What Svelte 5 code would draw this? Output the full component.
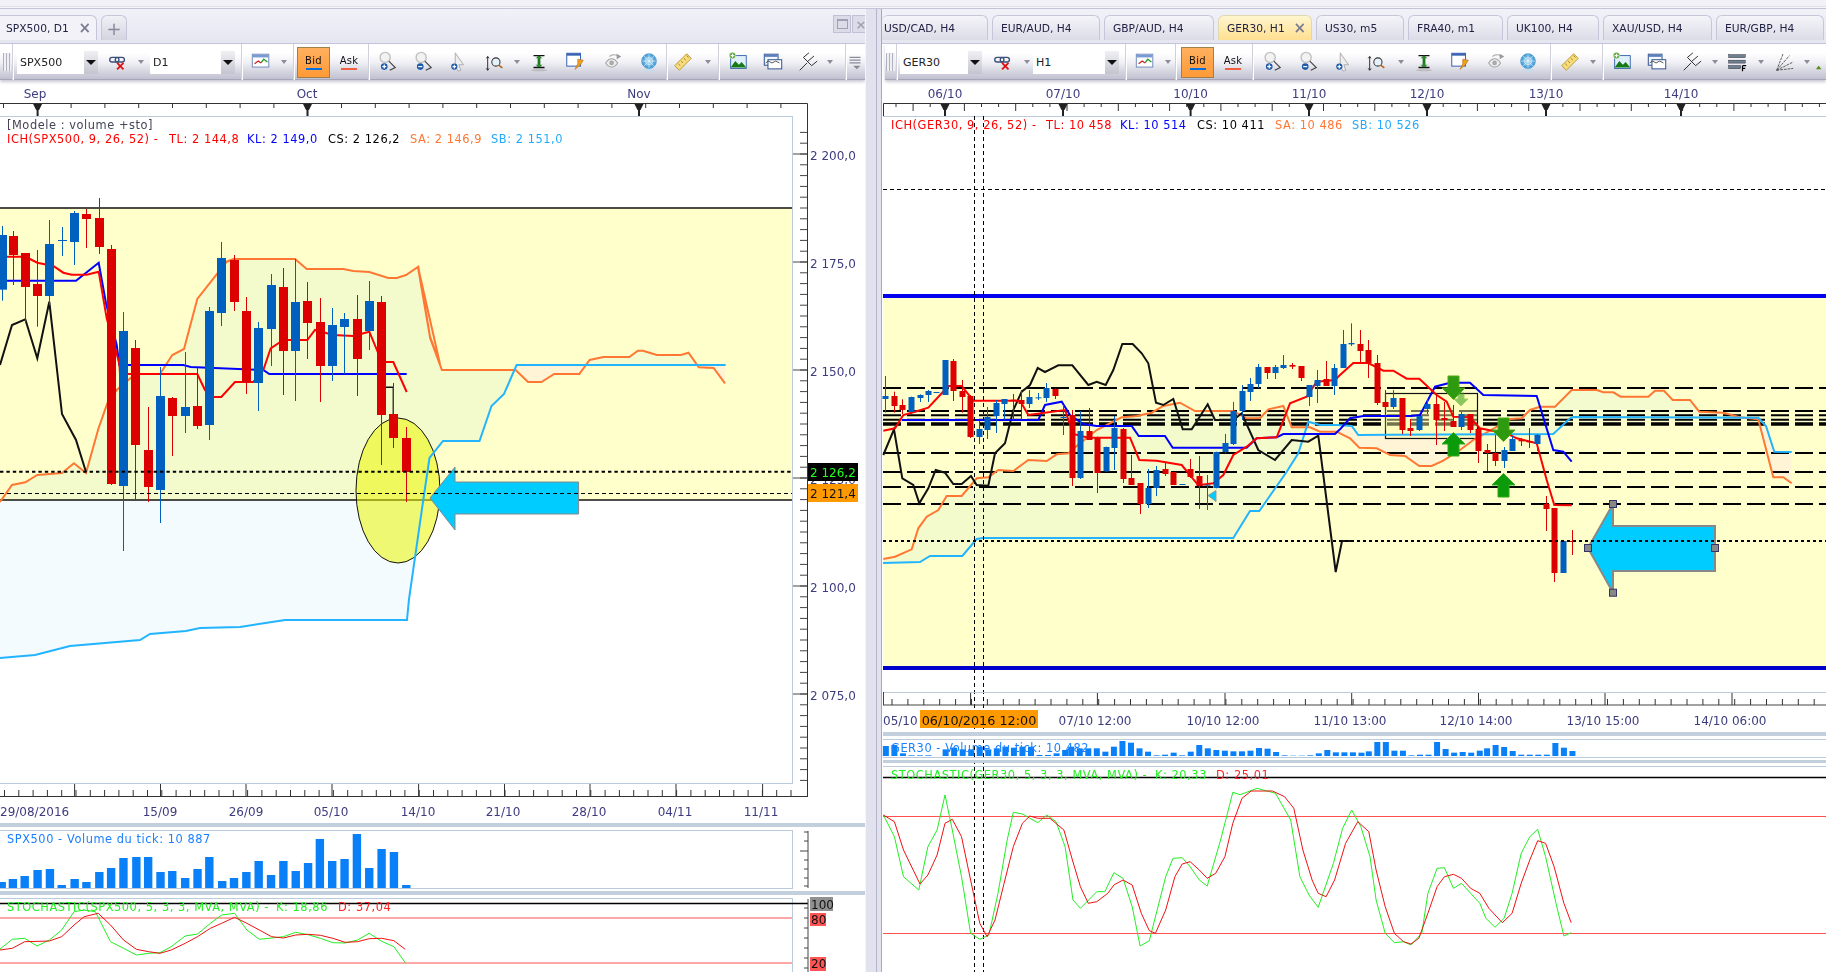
<script lang="ts">
  // every chart series below was read off a zoomed crop; each converter maps crop units to page pixels
  type Conv = (x: number, y: number) => [number, number];
  const z3: Conv = (x, y) => [x / 3, 190 + y / 3];
  const z4: Conv = (x, y) => [340 + x / 2.904, 240 + y / 3];
  const z5: Conv = (x, y) => [x / 1.782, 780 + y / 3];
  const z6: Conv = (x, y) => [870 + x / 3, 340 + y / 3];
  const z7: Conv = (x, y) => [1340 + x / 3, 340 + y / 3];
  const z8: Conv = (x, y) => [870 + x / 1.64, 680 + y / 3];

  function conv(flat: number[], c: Conv): [number, number][] {
    const out: [number, number][] = [];
    for (let i = 0; i < flat.length; i += 2) out.push(c(flat[i], flat[i + 1]));
    return out;
  }
  const pts = (list: [number, number][]) => list.map((p) => p[0].toFixed(1) + ',' + p[1].toFixed(1)).join(' ');
  const range = (from: number, step: number, to: number) => {
    const out: number[] = [];
    for (let v = from; step > 0 ? v <= to : v >= to; v += step) out.push(v);
    return out;
  };

  type Candle = { x: number; wt: number; bt: number; bb: number; wb: number; c: string };
  function candles(raw: (number | string)[][], c: Conv): Candle[] {
    return raw.map(([x, wt, bt, bb, wb, col]) => {
      const [px, pwt] = c(x as number, wt as number);
      const [, pbt] = c(x as number, bt as number);
      const [, pbb] = c(x as number, bb as number);
      const [, pwb] = c(x as number, wb as number);
      return { x: Math.round(px), wt: pwt, bt: pbt, bb: pbb, wb: pwb, c: col === 'r' ? '#dd0000' : '#0060c0' };
    });
  }

  // ---- left chart
  const leftCandles = candles([
    [5,108,135,299,332,'b'],[38,123,138,195,285,'r'],[76,190,189,291,400,'r'],[112,180,282,318,410,'r'],
    [148,90,162,318,345,'b'],[186,111,150,153,198,'b'],[223,63,69,156,225,'b'],[259,57,72,87,174,'r'],
    [296,24,84,171,192,'r'],[334,165,177,882,885,'r'],[370,366,423,888,1083,'b'],[406,450,474,765,931,'r'],
    [445,651,780,891,936,'r'],[481,531,618,900,999,'b'],[517,621,624,678,798,'r'],[554,486,651,678,729,'b'],
    [592,534,648,708,717,'r'],[628,351,363,705,750,'b'],[664,156,204,369,408,'b'],[702,195,210,336,363,'r'],
    [739,321,363,576,612,'r'],[775,396,414,579,663,'b'],[812,252,285,417,528,'b'],[850,234,291,483,615,'r'],
    [886,207,336,483,633,'b'],[922,276,333,399,507,'r'],[960,324,396,528,636,'r'],[997,354,405,528,573,'b'],
    [1033,369,387,411,552,'b'],[1070,315,387,507,618,'r'],[1108,273,333,423,480,'b'],[1144,318,336,675,825,'r'],
    [1180,579,672,744,774,'r'],[1218,711,744,846,936,'r']
  ], z3);

  const leftKijun = conv([0,272,228,272,296,218,318,340,350,465,358,525,550,525,572,531,790,540,808,552,1220,552], z3);
  const leftTenkan = conv([15,200,63,200,90,207,112,218,160,228,190,248,215,254,260,254,296,245,320,385,358,520,360,552,592,552,615,600,640,621,664,621,705,576,760,576,790,540,812,475,850,450,922,450,945,420,1000,435,1060,438,1108,425,1135,490,1155,516,1180,516,1220,606], z3);
  const leftChikou = conv([0,525,36,405,76,388,112,505,148,335,186,672,228,750,258,846], z3);
  const leftChikou2 = conv([1158,592,1180,592,1180,672], z3);
  const leftSaA = conv([0,936,36,885,76,877,112,855,186,849,222,820,258,849,295,717,322,640,350,600,406,552,480,552,517,495,552,477,592,327,680,215,700,207,885,207,920,237,1030,237,1060,243,1108,246,1165,264,1190,264,1218,255,1255,230,1290,440,1320,522], z3);
  const leftSaB = conv([226,78,262,295,296,390,510,390], z4);
  const leftSaC = conv([510,390,546,426,585,426,622,402,695,402,725,360], z4);
  const leftSaD = conv([725,360,765,351,840,351,865,332,880,332,920,345,990,345,1012,338,1042,382], z4);
  const leftSaE = conv([1042,382,1085,384,1118,430], z4);
  const leftSa = [...leftSaA, ...leftSaB, ...leftSaC, ...leftSaD, ...leftSaE];
  const leftSb: [number, number][] = [[0,658],[35,655],[70,646],[140,640],[150,634],[186,631],[200,628],[240,627],[285,620],[407,620],[409,599],[424,495],[429.5,458],[443,441],[479.5,441],[491.5,406],[504,394],[516.6,365],[725.7,365]];
  const leftCloud = [...leftSaA, ...leftSaB, ...leftSb.slice(0, 18).reverse()];
  const leftOrange1 = [...leftSaC, ...conv([725,375,510,375], z4)];
  const leftGreen2 = [...leftSaD, ...conv([1042,375,725,375], z4)];
  const leftOrange2 = [...leftSaE, ...conv([1118,375,1042,375], z4)];

  const leftVol = [[3,306],[23,297],[44,288],[67,270],[89,267],[110,315],[133,297],[154,306],[177,276],[198,264],[220,234],[243,231],[264,231],[286,276],[307,273],[330,294],[352,267],[373,231],[396,303],[417,294],[439,276],[461,243],[483,285],[505,243],[527,273],[549,249],[570,177],[592,243],[614,237],[636,162],[658,264],[680,207],[702,216],[724,315]]
    .map(([x, y]) => ({ x: x / 1.782, y: 780 + y / 3 }));

  const leftK = conv([0,507,22,478,44,475,66,498,88,480,110,450,132,395,150,390,170,395,197,485,220,505,243,525,265,520,285,518,305,500,330,468,352,462,375,430,395,405,418,400,440,450,462,478,484,474,505,470,527,457,549,464,571,475,593,488,615,489,637,480,658,460,680,484,702,500,723,550], z5);
  const leftD = conv([0,510,22,505,44,485,88,483,110,470,132,435,150,410,175,400,197,435,220,480,243,508,265,515,285,520,305,510,330,490,352,470,375,445,395,430,418,412,440,430,462,450,484,470,505,474,527,465,549,463,571,466,593,475,615,487,637,485,658,476,680,475,702,482,722,508], z5);

  const leftPrices = [[2200, 154], [2175, 262], [2150, 370], [2125, 478], [2100, 586], [2075, 694]];
  const fmtPrice = (p: number) => String(p).replace(/^(\d)(\d{3})$/, '$1 $2') + ',0';
  const leftDates = [[160, '15/09'], [246, '26/09'], [331, '05/10'], [418, '14/10'], [503, '21/10'], [589, '28/10'], [675, '04/11'], [761, '11/11']] as [number, string][];
  const leftMajors = [74.6, 160.5, 246, 332, 418.6, 504.5, 590, 676, 762.6];

  // ---- right chart
  const rightCandles = candles([
    [46,108,168,177,218,'b'],[72,155,168,198,218,'r'],[97,178,195,210,222,'r'],[123,170,171,216,222,'b'],
    [149,163,165,174,186,'b'],[174,150,153,165,186,'b'],[199,156,156,158,158,'b'],[225,60,60,165,165,'b'],
    [250,57,63,153,183,'r'],[276,120,153,171,218,'r'],[301,165,168,291,294,'r'],[327,243,267,291,312,'b'],
    [352,201,231,270,297,'b'],[378,180,189,228,279,'b'],[403,177,177,192,240,'b'],[429,162,179,183,240,'r'],
    [453,150,180,192,240,'r'],[478,150,171,192,204,'b'],[504,159,172,174,180,'b'],[529,129,144,174,186,'b'],
    [555,145,147,168,177,'r'],[580,195,231,233,285,'b'],[606,210,225,414,438,'r'],[631,213,273,414,417,'b'],
    [656,204,273,300,300,'r'],[682,290,294,399,459,'r'],[708,320,321,394,395,'b'],[733,228,264,324,390,'b'],
    [759,264,267,417,429,'r'],[784,345,414,435,435,'r'],[809,429,429,492,522,'r'],[834,387,444,492,504,'b'],
    [859,378,390,444,468,'b'],[885,366,387,402,408,'r'],[910,396,396,435,435,'r'],[936,432,432,435,435,'b'],
    [961,357,387,411,414,'r'],[987,348,408,438,507,'r'],[1012,405,434,436,510,'b'],[1038,335,336,444,445,'b'],
    [1064,282,309,336,340,'b'],[1089,186,213,312,315,'b'],[1115,135,153,213,240,'b'],[1140,114,132,156,183,'b'],
    [1165,72,81,132,144,'b'],[1190,81,81,99,117,'r'],[1215,75,81,99,117,'b'],[1240,45,75,84,87,'b'],
    [1266,69,75,80,87,'r'],[1292,78,78,114,123,'r'],[1317,135,135,171,198,'b'],[1342,90,120,138,189,'b'],
    [1368,63,117,138,138,'r'],[1393,72,84,138,165,'b'],[1418,-30,12,84,84,'b']
  ], z6).concat(candles([
    [34,-50,9,13,18,'b'],[60,-30,12,33,66,'r'],[85,0,30,69,114,'r'],[110,45,69,189,195,'r'],
    [136,150,186,201,270,'r'],[160,150,174,201,207,'b'],[186,174,174,270,282,'r'],[211,237,264,273,288,'r'],
    [236,228,228,270,273,'b'],[262,177,192,207,222,'b'],[288,165,192,240,315,'r'],[313,186,234,240,273,'r'],
    [339,195,243,261,261,'r'],[364,216,222,261,270,'b'],[390,222,222,270,279,'r'],[415,261,267,333,369,'r'],
    [440,312,330,339,393,'r'],[466,285,339,363,378,'r'],[491,321,330,363,384,'b'],[517,288,297,333,333,'b'],
    [542,294,300,304,318,'r'],[568,264,303,307,324,'r'],[592,282,285,312,333,'b'],[618,468,492,507,573,'r'],
    [643,504,504,699,726,'r'],[669,603,603,699,699,'b'],[695,570,603,606,645,'r']
  ], z7));

  const rightKijun = [...conv([95,240,505,240,525,195,575,185,600,225,640,252,680,258,785,258,806,288,885,288,908,323,1130,323,1160,295,1220,292,1240,282,1395,282], z6), ...conv([0,268,30,235,70,228,215,228,240,225,285,140,330,128,390,128,430,165,590,168,640,330,670,335,695,365], z7)];
  const rightTenkan = [...conv([40,272,75,265,100,225,135,215,175,203,215,160,235,138,275,138,310,182,450,182,475,225,585,210,610,282,655,293,780,293,808,360,860,362,935,375,985,436,1030,430,1060,405,1090,345,1130,320,1160,295,1220,292,1260,190,1310,170,1340,125,1395,120], z6), ...conv([0,105,40,69,85,69,130,92,160,92,200,116,238,116,290,165,320,185,340,230,390,232,420,265,460,273,490,275,530,295,590,310,620,420,643,495,695,496], z7)];
  const rightChikou = [...conv([40,345,72,268,97,415,130,435,148,490,175,445,197,390,225,398,250,432,275,432,303,408,320,435,355,437,375,340,405,310,430,210,455,155,480,135,503,84,525,96,565,76,607,76,655,135,680,125,707,135,730,90,757,12,788,12,815,40,835,70,858,188,880,195,910,177,938,268,965,268,1013,193,1035,240,1090,240,1115,220,1165,330,1215,360,1265,300,1315,305,1345,287,1397,696], z6), ...conv([6,603,40,603], z7)];
  const rSaA = conv([40,657,75,650,125,628,145,565,170,530,205,510,230,468,275,468,320,415,355,412,385,390,430,393,475,360,530,363,560,343,595,340,620,318,680,270,755,232,800,228,845,218,880,198,930,188,975,213,1090,213,1130,235,1170,235,1195,208,1240,198,1265,262,1320,262], z6);
  const rSaB = conv([1350,275,1400,275], z6);
  const rSaC = conv([30,295,58,323,110,325,150,345,195,348,238,378,275,378,310,362,360,330,400,300], z7);
  const rSaD = conv([512,237,545,235,570,210,600,200,645,200,695,150,770,150,790,157,820,157,842,170,925,170,945,152,972,152,998,180,1050,180,1078,215,1150,218,1200,232,1255,238,1300,412,1330,412,1355,430], z7);
  const rightSa = [...rSaA, ...rSaB, ...rSaC, ...rSaD];
  const rSbA: [number, number][] = [[883,563],[920,562],...conv([180,648,277,648,320,597,340,594,1090,594,1140,513,1168,513,1250,395,1285,340,1315,245,1350,255,1400,255], z6)];
  const rSbB = conv([35,258,55,285,640,282,690,235,700,231,1255,233,1278,258,1303,335,1355,336], z7);
  const rightSb = [...rSbA, ...rSbB];
  const rightGreen1 = [...rSaA, ...rSbA.slice(0, 11).reverse()];
  const rightOrange1 = conv([-95,245,0,268,35,258,55,285,425,288,400,300,360,330,310,362,275,378,238,378,195,348,150,345,110,325,58,323,30,295,-30,275,-90,262], z7);
  const rightGreen2 = conv([425,288,512,237,545,235,570,210,600,200,645,200,695,150,770,150,790,157,820,157,842,170,925,170,945,152,972,152,998,180,1050,180,1078,215,1150,218,1200,232,700,232,690,235,640,282], z7);
  const rightOrange2 = conv([1255,235,1278,258,1303,335,1355,336,1355,430,1330,412,1300,412], z7);
  const dashRows = [388, 411, 415.3, 419.7, 453, 472, 487, 504];

  const rightVolRaw = [[26,198],[40,195],[54,220],[68,226],[82,226],[96,226],[110,228],[124,208],[138,203],[152,208],[166,208],[180,200],[194,208],[208,205],[222,200],[236,203],[250,200],[264,200],[278,225],[292,225],[306,220],[320,210],[330,200],[344,205],[358,205],[372,205],[386,215],[400,200],[414,183],[428,188],[442,205],[456,215],[470,226],[484,224],[498,218],[512,226],[526,215],[540,195],[554,205],[568,210],[582,212],[596,214],[610,214],[624,212],[638,204],[652,206],[666,216],[680,226],[694,227],[708,227],[722,226],[736,220],[750,210],[764,217],[778,217],[792,217],[806,218],[818,214],[832,186],[846,186],[860,212],[874,212],[888,226],[902,224],[916,224],[930,186],[944,207],[958,218],[972,216],[986,218],[1000,212],[1012,205],[1026,195],[1040,201],[1054,213],[1068,224],[1082,224],[1096,224],[1110,224],[1124,189],[1138,203],[1152,213]];
  const rightVol = rightVolRaw.map(([x, y]) => ({ x: 870 + x / 1.64, y: 680 + y / 3 }));

  const rightK = conv([22,405,40,470,55,590,80,630,95,500,110,450,123,345,135,450,150,590,165,760,180,778,195,765,210,640,225,480,235,397,250,402,275,428,290,405,305,425,320,500,333,660,345,685,372,635,385,635,400,578,415,595,430,680,443,798,458,782,485,590,497,535,512,533,525,560,540,600,553,618,575,480,595,337,607,344,635,325,665,340,690,420,705,590,720,645,735,682,760,550,775,445,790,390,805,440,820,530,830,660,845,760,860,788,875,785,887,795,905,760,915,640,930,565,942,563,957,625,970,610,985,640,1000,670,1010,715,1025,742,1040,715,1053,640,1068,520,1082,470,1095,448,1108,530,1125,670,1138,768,1150,758], z8);
  const rightD = conv([22,405,40,425,55,510,82,612,95,585,110,525,123,430,135,418,150,470,165,600,180,730,192,770,205,720,220,610,235,500,250,430,262,408,275,415,295,415,318,450,332,540,345,620,358,670,372,665,390,640,400,615,415,600,430,615,445,700,458,752,468,760,485,690,500,590,512,552,525,545,540,570,553,595,567,580,582,530,595,430,610,355,625,333,660,333,680,350,695,385,710,510,725,600,735,640,748,650,762,600,780,490,800,425,818,455,830,570,845,680,860,760,875,785,887,792,900,775,915,700,930,620,942,590,957,583,970,595,985,625,1000,640,1015,685,1037,728,1053,700,1068,610,1082,540,1095,482,1108,490,1122,560,1138,670,1150,728], z8);

  const rightTop = [[945, '06/10'], [1063, '07/10'], [1190.6, '10/10'], [1309, '11/10'], [1427, '12/10'], [1546, '13/10'], [1681, '14/10']] as [number, string][];
  const rightBottom = [[1095, '07/10 12:00'], [1223, '10/10 12:00'], [1350, '11/10 13:00'], [1476, '12/10 14:00'], [1603, '13/10 15:00'], [1730, '14/10 06:00']] as [number, string][];
  const rightMajors = [970.6, 1097.4, 1225, 1351.7, 1478.5, 1605, 1732];

  // ---- toolbars: [kind, width] laid out in order
  type Tool = [string, number, string?];
  const leftTools: Tool[] = [
    ['gap', 3], ['grip', 8], ['gap', 1], ['sep', 1], ['gap', 4], ['select', 81, 'SPX500'], ['link', 40], ['arrow', 6], ['gap', 6],
    ['select', 85, 'D1'], ['gap', 6], ['sep', 1], ['chart', 38], ['arrow', 8], ['gap', 5], ['sep', 1], ['gap', 3], ['bid', 33], ['ask', 38], ['sep', 1],
    ['zoomin', 36], ['zoomout', 35], ['cursor', 36], ['zoomrect', 38], ['arrow', 6], ['iheight', 38], ['note', 34], ['eye', 42], ['radar', 30],
    ['gap', 2], ['sep', 1], ['ruler', 32], ['arrow', 18], ['gap', 1], ['sep', 1], ['pic', 38], ['window', 32], ['fork', 38], ['arrow', 6], ['gap', 12], ['sep', 1], ['more', 18]
  ];
  const rightTools: Tool[] = [
    ['gap', 1], ['grip', 9], ['gap', 1], ['sep', 1], ['gap', 3], ['select', 82, 'GER30'], ['link', 42], ['arrow', 6], ['gap', 3],
    ['select', 86, 'H1'], ['gap', 6], ['sep', 1], ['chart', 38], ['arrow', 8], ['gap', 3], ['sep', 1], ['gap', 5], ['bid', 33], ['ask', 38], ['sep', 1],
    ['zoomin', 37], ['zoomout', 35], ['cursor', 35], ['zoomrect', 34], ['arrow', 14], ['iheight', 32], ['note', 40], ['eye', 32], ['radar', 32],
    ['gap', 6], ['sep', 1], ['ruler', 38], ['arrow', 8], ['gap', 5], ['sep', 1], ['pic', 38], ['window', 32], ['fork', 38], ['arrow', 8],
    ['rows', 36], ['arrow', 12], ['fan', 34], ['arrow', 12], ['next', 26]
  ];
  const rightTabs = [
    ['USD/CAD, H4', 106], ['EUR/AUD, H4', 108], ['GBP/AUD, H4', 110], ['GER30, H1', 94], ['US30, m5', 88],
    ['FRA40, m1', 95], ['UK100, H4', 92], ['XAU/USD, H4', 109], ['EUR/GBP, H4', 108]
  ] as [string, number][];
</script>

{#snippet toolbar(items: Tool[])}
  <div class="toolbar">
    {#each items as [kind, w, label]}
      <div class="tool" style:width="{w}px">
        {#if kind === 'grip'}
          <span class="grip"></span>
        {:else if kind === 'sep'}
          <span class="sep"></span>
        {:else if kind === 'select'}
          <span class="select"><span>{label}</span><i class="drop"></i></span>
        {:else if kind === 'arrow'}
          <i class="caret"></i>
        {:else if kind === 'bid'}
          <span class="price-btn on">Bid<b class="blue"></b></span>
        {:else if kind === 'ask'}
          <span class="price-btn">Ask<b class="coral"></b></span>
        {:else if kind !== 'gap'}
          {@render icon(kind)}
        {/if}
      </div>
    {/each}
  </div>
{/snippet}

{#snippet icon(name: string)}
  <svg class="ico" viewBox="0 0 24 24" width="22" height="22">
    {#if name === 'link'}
      <rect x="3" y="7" width="10" height="5" rx="2.5" fill="none" stroke="#3a5078" stroke-width="1.5" />
      <rect x="9" y="7" width="10" height="5" rx="2.5" fill="none" stroke="#3a5078" stroke-width="1.5" />
      <path d="M11 13l7 7M18 13l-7 7" stroke="#e01010" stroke-width="2" />
    {:else if name === 'chart'}
      <rect x="2.5" y="3.5" width="18" height="14" fill="#fff" stroke="#6a82b8" />
      <rect x="3" y="4" width="17" height="3" fill="#7a9ad4" />
      <path d="M5 14l4-3 3 2" fill="none" stroke="#cc2222" stroke-width="1.4" />
      <path d="M12 13l3-4 4 3" fill="none" stroke="#2a9a2a" stroke-width="1.4" />
      <rect x="4" y="19" width="15" height="2" fill="#dcdce8" />
    {:else if name === 'zoomin' || name === 'zoomout'}
      <circle cx="10" cy="7" r="5.5" fill="#f2f2f2" stroke="#c0c0c0" stroke-width="1.5" />
      <path d="M14 11l7 7-6 3" fill="none" stroke="#444" stroke-width="1.2" />
      <circle cx="9" cy="17" r="3.6" fill="#1a58a8" />
      <path d="M6.8 17h4.4" stroke="#fff" stroke-width="1.4" />
      {#if name === 'zoomin'}<path d="M9 14.8v4.4" stroke="#fff" stroke-width="1.4" />{/if}
    {:else if name === 'cursor'}
      <path d="M9 2l9 13-5 0 2 6-3 1-3-6z" fill="#eee" stroke="#a8a8a8" />
      <circle cx="8" cy="17" r="3.4" fill="#1a58a8" />
      <path d="M6 17h4M8 15v4" stroke="#fff" stroke-width="1.3" />
    {:else if name === 'zoomrect'}
      <path d="M4 6v15M2.5 8l1.5-2 1.5 2M2.5 19l1.5 2 1.5-2" fill="none" stroke="#222" stroke-width="1" />
      <circle cx="13" cy="12" r="4.5" fill="#e4f2fb" stroke="#333" stroke-width="1.1" />
      <path d="M16 15.5l4 3" stroke="#c06010" stroke-width="1.8" />
    {:else if name === 'iheight'}
      <path d="M6 5h12M6 18h12" stroke="#111" stroke-width="1.5" />
      <path d="M12 6v11" stroke="#1d7a1d" stroke-width="3" />
      <path d="M9 8l3-3 3 3M9 15l3 3 3-3" fill="#2a9a2a" stroke="#114411" stroke-width=".7" />
      <ellipse cx="12" cy="21" rx="9" ry="1" fill="#bbb" />
    {:else if name === 'note'}
      <rect x="3" y="2.5" width="15" height="14" fill="#fff" stroke="#3a64b4" stroke-width="1.1" />
      <rect x="3" y="2.5" width="15" height="2.6" fill="#3a64b4" />
      <path d="M15 9l6 1-3 5-6 5 3-6z" fill="#f0a020" stroke="#b87010" stroke-width=".7" />
    {:else if name === 'eye'}
      <path d="M4 13c4-6 9-6 13 0-4 6-9 6-13 0z" fill="#eee" stroke="#a0a0a0" stroke-width="1.1" />
      <circle cx="10.5" cy="13" r="2.6" fill="#aaa" />
      <path d="M8 6c4-3 8-2 10 0" fill="none" stroke="#b4b4b4" stroke-width="1.4" />
      <path d="M16 3l5 3-5 3z" fill="#999" />
    {:else if name === 'radar'}
      <defs><radialGradient id="rg"><stop offset="0" stop-color="#bfe6f8" /><stop offset="1" stop-color="#3a94d0" /></radialGradient></defs>
      <circle cx="12" cy="11" r="8" fill="url(#rg)" stroke="#4c9ed8" />
      <path d="M12 3v16M4 11h16M6 5l12 12M18 5L6 17" stroke="#eaf6fc" stroke-width=".6" />
      <circle cx="12" cy="11" r="4" fill="none" stroke="#eaf6fc" stroke-width=".6" />
      <ellipse cx="12" cy="21" rx="6" ry="1.4" fill="#c2dcec" />
    {:else if name === 'ruler'}
      <path d="M3 16L16 3l5 5L8 21z" fill="#f7dc7c" stroke="#b89530" />
      <path d="M7 14l2 2M10 11l2 2M13 8l2 2M16 5l2 2" stroke="#9a7a20" />
    {:else if name === 'pic'}
      <rect x="4" y="5" width="17" height="14" fill="#dff0fb" stroke="#3462a8" />
      <path d="M4 18l5-7 4 4 3-3 5 6z" fill="#167a16" />
      <circle cx="6" cy="5" r="3.6" fill="#58a838" stroke="#fff" stroke-width=".6" />
      <path d="M4 5h4M6 3v4" stroke="#fff" stroke-width="1.2" />
    {:else if name === 'window'}
      <rect x="2.5" y="3.5" width="15" height="12" fill="#f4f8ff" stroke="#34558e" stroke-width="1.1" />
      <rect x="3" y="4" width="14" height="2.4" fill="#5a7fc0" />
      <rect x="6.5" y="9.5" width="15" height="10" fill="#fff" stroke="#34558e" stroke-width="1.1" />
      <path d="M4 13l3-2 4 2 4-2 4 2" fill="none" stroke="#222" stroke-width=".8" />
    {:else if name === 'fork'}
      <path d="M3 21l8-8M7 7l9 9M7 7l6-5M11.5 11.5l7-6M16 16l6-5" fill="none" stroke="#222" stroke-width="1" />
    {:else if name === 'rows'}
      <rect x="3" y="4" width="18" height="3.2" fill="#6f8090" stroke="#223" stroke-width=".5" />
      <rect x="3" y="10" width="18" height="3.2" fill="#6f8090" stroke="#223" stroke-width=".5" />
      <rect x="3" y="16" width="13" height="3.2" fill="#6f8090" stroke="#223" stroke-width=".5" />
      <path d="M18 16v6M18 16h4M18 19h3" stroke="#000" stroke-width="1.3" fill="none" />
    {:else if name === 'fan'}
      <path d="M4 21L18 5M4 21l7-18M4 21L22 12M4 21l18-2" fill="none" stroke="#444" stroke-width=".9" stroke-dasharray="3 1" />
    {:else if name === 'next'}
      <path d="M1 20l3-4 3 4z" fill="#5a8a1a" />
    {:else if name === 'more'}
      <path d="M6 7h12M6 10h12M6 13h12" stroke="#8a8a9c" stroke-width="1.2" />
      <path d="M10 16h8l-4 4z" fill="#8a8a9c" />
    {/if}
  </svg>
{/snippet}

{#snippet series(list: [number, number][], color: string, width: number)}
  <polyline points={pts(list)} fill="none" stroke={color} stroke-width={width} />
{/snippet}

{#snippet bars(list: Candle[], w: number)}
  {#each list as k}
    <line x1={k.x + 0.5} x2={k.x + 0.5} y1={k.wt} y2={k.wb} stroke={k.c} />
    <rect x={k.x + 0.5 - w / 2} y={k.bt} width={w} height={Math.max(k.bb - k.bt, 1)} fill={k.c} />
  {/each}
{/snippet}

<div class="screen">
  <div class="strip"></div>
  <div class="workspace">
    <section class="pane left">
      <div class="tabbar">
        <div class="tab first active-white" style:width="97px">
          <span>SPX500, D1</span><span class="close">×</span>
        </div>
        <div class="tab plus">+</div>
        <div class="winbtns">
          <span class="winbtn"><i class="restore"></i></span>
          <span class="winbtn">×</span>
        </div>
      </div>
      {@render toolbar(leftTools)}

      <svg class="chart" viewBox="0 80 865 892" width="865" height="892">
        <!-- top time axis -->
        <text class="axis" x="35" y="98" text-anchor="middle">Sep</text>
        <text class="axis" x="307" y="98" text-anchor="middle">Oct</text>
        <text class="axis" x="639" y="98" text-anchor="middle">Nov</text>
        <path d="M0 103.5H807.5V796" fill="none" stroke="#333" />
        {#each range(3.5, 33.8, 800) as t}
          <line x1={t} x2={t} y1="104" y2="108" stroke="#333" />
        {/each}
        {#each [37.6, 307.5, 639] as m}
          <path d="M{m - 4.5} 104h9l-3 6h-0.5v6h-2v-6h-0.5z" fill="#222" />
        {/each}

        <!-- price area -->
        <rect x="0" y="208" width="792" height="292" fill="#ffffcc" />
        <polygon class="cloud" points={pts(leftCloud)} />
        <polygon points={pts(leftOrange1)} fill="#fff5d6" />
        <polygon points={pts(leftGreen2)} fill="#f3fbcf" />
        <polygon points={pts(leftOrange2)} fill="#fff5d6" />
        <line x1="0" x2="792" y1="208" y2="208" stroke="#111" stroke-width="1.4" />
        <line x1="0" x2="792" y1="500" y2="500" stroke="#111" stroke-width="1.4" />

        <ellipse cx="398" cy="490.5" rx="42" ry="72.5" fill="rgba(235,245,0,0.55)" stroke="#111" />

        {@render series(leftSa, '#ff7733', 2)}
        {@render series(leftSb, '#22b4ff', 2)}
        {@render series(leftChikou, '#111', 2)}
        {@render series(leftChikou2, '#111', 1.4)}
        {@render series(leftKijun, '#0000ff', 2)}
        {@render series(leftTenkan, '#ff0000', 2)}
        {@render bars(leftCandles, 9)}

        <path d="M430 498L455 467V482H578.6V514H455V530Z" fill="#00ccff" stroke="#888" />
        <line x1="0" x2="792" y1="471.7" y2="471.7" stroke="#000" stroke-width="2" stroke-dasharray="3.4 3" />
        <line x1="0" x2="792" y1="493.5" y2="493.5" stroke="#000" stroke-dasharray="4 3" />

        <rect x="-2" y="116.5" width="794.5" height="667" fill="none" stroke="#bccbdc" />
        <text class="legend" x="7" y="129" fill="#445">[Modele : volume +sto]</text>
        <text class="legend" x="7" y="143">
          <tspan fill="#ff0000">ICH(SPX500, 9, 26, 52) -</tspan>
          <tspan x="169" fill="#ff0000">TL: 2 144,8</tspan>
          <tspan x="247" fill="#0000ff">KL: 2 149,0</tspan>
          <tspan x="328" fill="#000">CS: 2 126,2</tspan>
          <tspan x="410" fill="#ff7733">SA: 2 146,9</tspan>
          <tspan x="491" fill="#22aaff">SB: 2 151,0</tspan>
        </text>

        <!-- price scale -->
        {#each range(132.4, 10.8, 783) as t}
          <line x1="800" x2="807" y1={t} y2={t} stroke="#444" />
        {/each}
        {#each leftPrices as [p, y]}
          <line x1="793" x2="807" y1={y} y2={y} stroke="#444" />
          <text class="axis" x="810" y={y + 6}>{fmtPrice(p)}</text>
        {/each}
        <rect x="808" y="463" width="50" height="18" fill="#000" />
        <text class="axis green" x="810" y="476.5">2 126,2</text>
        <rect x="808" y="484" width="50" height="18" fill="#ff9900" />
        <text class="axis dark" x="810" y="498">2 121,4</text>

        <!-- bottom time axis -->
        <line x1="0" x2="808" y1="796.5" y2="796.5" stroke="#333" />
        {#each range(4.5, 14.3, 805) as t}
          <line x1={t} x2={t} y1="790" y2="796" stroke="#333" />
        {/each}
        {#each leftMajors as t}
          <line x1={t} x2={t} y1="784" y2="796" stroke="#333" />
        {/each}
        <text class="axis" x="0" y="816">29/08/2016</text>
        {#each leftDates as [x, d]}
          <text class="axis" x={x} y="816" text-anchor="middle">{d}</text>
        {/each}

        <rect x="0" y="823" width="865" height="4" fill="#c2cfdd" />

        <!-- volume -->
        <rect x="-2" y="830.5" width="794.5" height="58" fill="none" stroke="#bccbdc" />
        {#each leftVol as v}
          <rect x={v.x - 4.2} y={v.y} width="8.4" height={888 - v.y} fill="#0a80f8" />
        {/each}
        <text class="legend" x="7" y="843" fill="#1a80ff">SPX500 - Volume du tick: 10 887</text>
        {#each [832, 841, 851, 860, 869, 878, 886] as t, i}
          <line x1={i === 2 ? 800 : 804} x2="808" y1={t} y2={t} stroke="#444" />
        {/each}
        <line x1="808" x2="808" y1="831" y2="888" stroke="#444" />

        <rect x="0" y="891" width="865" height="4" fill="#c2cfdd" />

        <!-- stochastic -->
        <rect x="-2" y="898.5" width="794.5" height="80" fill="none" stroke="#bccbdc" />
        <line x1="0" x2="808" y1="903.5" y2="903.5" stroke="#000" stroke-width="1.4" />
        <line x1="0" x2="792" y1="918" y2="918" stroke="#ff5050" />
        <line x1="0" x2="792" y1="963" y2="963" stroke="#ff5050" />
        {@render series(leftK, '#22ee22', 1)}
        {@render series(leftD, '#ee1111', 1)}
        <text class="legend" x="7" y="911">
          <tspan fill="#22ee22">STOCHASTIC(SPX500, 5, 3, 3, MVA, MVA) -</tspan>
          <tspan x="276" fill="#22ee22">K: 18,86</tspan>
          <tspan x="338" fill="#ff2222">D: 37,04</tspan>
        </text>
        <line x1="808" x2="808" y1="899" y2="972" stroke="#444" />
        {#each [908, 918, 928, 938, 948, 958, 968] as t}
          <line x1="804" x2="808" y1={t} y2={t} stroke="#444" />
        {/each}
        <rect x="810" y="897" width="23" height="14" fill="#909090" />
        <text class="axis dark" x="811" y="908.5">100</text>
        <rect x="810" y="913" width="16" height="13" fill="#ff5555" />
        <text class="axis dark" x="811" y="924">80</text>
        <rect x="810" y="957" width="16" height="14" fill="#ff5555" />
        <text class="axis dark" x="811" y="968">20</text>
      </svg>
    </section>

    <div class="splitter"></div>

    <section class="pane right">
      <div class="tabbar rtabs">
        {#each rightTabs as [label, w], i}
          <div class="tab" class:first-cut={i === 0} class:current={label === 'GER30, H1'} style:width="{w}px">
            <span>{label}</span>
            {#if label === 'GER30, H1'}<span class="close">×</span>{/if}
          </div>
        {/each}
        <div class="tab" style:width="40px"></div>
      </div>
      {@render toolbar(rightTools)}

      <svg class="chart" viewBox="882 80 944 892" width="944" height="892">
        <!-- top time axis -->
        {#each rightTop as [x, d]}
          <text class="axis" x={x} y="98" text-anchor="middle">{d}</text>
        {/each}
        <path d="M883.5 117V103.5H1826" fill="none" stroke="#333" />
        {#each range(896, 17.1, 1826) as t, i}
          <line x1={t} x2={t} y1="104" y2={i % 3 === 1 ? 111 : 107} stroke="#333" />
        {/each}
        {#each rightTop as [m]}
          <path d="M{m - 4.5} 104h9l-3 6h-0.5v6h-2v-6h-0.5z" fill="#222" />
        {/each}
        <line x1="883" x2="1826" y1="116.5" y2="116.5" stroke="#bccbdc" />

        <text class="legend" x="891" y="129">
          <tspan fill="#ff0000">ICH(GER30, 9, 26, 52) -</tspan>
          <tspan x="1046" fill="#ff0000">TL: 10 458</tspan>
          <tspan x="1120" fill="#0000ff">KL: 10 514</tspan>
          <tspan x="1197" fill="#000">CS: 10 411</tspan>
          <tspan x="1275" fill="#ff7733">SA: 10 486</tspan>
          <tspan x="1352" fill="#22aaff">SB: 10 526</tspan>
        </text>

        <line x1="883" x2="1826" y1="189.5" y2="189.5" stroke="#000" stroke-dasharray="4 3" />
        <rect x="883" y="296" width="943" height="372" fill="#ffffcc" />
        <polygon class="cloud" points={pts(rightGreen1)} />
        <polygon points={pts(rightOrange1)} fill="#fff5d6" />
        <polygon points={pts(rightGreen2)} fill="#f3fbcf" />
        <polygon points={pts(rightOrange2)} fill="#fff5d6" />
        <rect x="883" y="294" width="943" height="4" fill="#0000ee" />
        <rect x="883" y="666" width="943" height="4" fill="#0000cc" />

        {#each dashRows as y}
          <line x1="883" x2="1826" y1={y} y2={y} stroke="#000" stroke-width="2" stroke-dasharray="18 6" />
        {/each}
        <line x1="883" x2="1826" y1="424" y2="424" stroke="#000" stroke-width="3.4" stroke-dasharray="18 6" />

        <!-- selection box behind the signal arrows -->
        <rect x="1385.5" y="393.5" width="92" height="45" fill="rgba(255,255,170,0.45)" stroke="#111" stroke-width="1.2" />

        {@render series(rightSa, '#ff7733', 2)}
        {@render series(rightSb, '#22b4ff', 2)}
        {@render series(rightChikou, '#111', 2)}
        {@render series(rightKijun, '#0000ff', 2)}
        {@render series(rightTenkan, '#ff0000', 2)}
        {@render bars(rightCandles, 6)}

        <path d="M1208 495.5l8-5v11z" fill="#00ccff" stroke="#999" />

        <!-- signal arrows -->
        {#each [[1453.5, 376, 1], [1503.5, 418, 1], [1461, 393, 2]] as [x, y, kind]}
          <g class:faded={kind === 2} transform="translate({x} {y})" >
            <path d={kind === 2 ? 'M-3 0H3V6H7L0 13 -7 6H-3Z' : 'M-5.5 0H5.5V12H11.5L0 23.5 -11.5 12H-5.5Z'} fill="#2e9a10" stroke="#4faa18" />
          </g>
        {/each}
        {#each [[1453.5, 432.5], [1503.5, 473.5]] as [x, y]}
          <path transform="translate({x} {y})" d="M-5.5 23.5H5.5V11.5H11.5L0 0 -11.5 11.5H-5.5Z" fill="#0a9a0a" stroke="#2faa18" />
        {/each}

        <!-- drawn arrow with its handles -->
        <path d="M1588 548L1613 504V526H1715V571H1613V592.7Z" fill="#00ccff" stroke="#888" stroke-width="2" />
        {#each [[1613, 504], [1588, 548], [1613, 592.7], [1715, 548]] as [x, y]}
          <rect x={x - 3.5} y={y - 3.5} width="7" height="7" fill="#888" stroke="#336" />
        {/each}
        <line x1="883" x2="1826" y1="541" y2="541" stroke="#000" stroke-width="2" stroke-dasharray="3 3" />

        <line x1="974.5" x2="974.5" y1="116" y2="972" stroke="#000" stroke-dasharray="4 3" />
        <line x1="983.5" x2="983.5" y1="116" y2="972" stroke="#000" stroke-dasharray="4 3" />

        <!-- bottom time axis -->
        <line x1="883" x2="1826" y1="692.5" y2="692.5" stroke="#bccbdc" />
        <line x1="883" x2="1826" y1="705" y2="705" stroke="#444" />
        <line x1="883.5" x2="883.5" y1="692" y2="705" stroke="#444" />
        {#each range(892, 15.9, 1826) as t}
          <line x1={t} x2={t} y1="699" y2="705" stroke="#333" />
        {/each}
        {#each rightMajors as t}
          <line x1={t} x2={t} y1="693" y2="705" stroke="#333" />
        {/each}
        <text class="axis" x="883" y="725">05/10</text>
        <rect x="920" y="710" width="118" height="18" fill="#ff9900" />
        <text class="axis stamp" x="979" y="725" text-anchor="middle">06/10/2016 12:00</text>
        {#each rightBottom as [x, d]}
          <text class="axis" x={x} y="725" text-anchor="middle">{d}</text>
        {/each}

        <rect x="883" y="732" width="943" height="4" fill="#c2cfdd" />
        <line x1="883" x2="1826" y1="739.5" y2="739.5" stroke="#bccbdc" />

        <!-- volume -->
        {#each rightVol as v}
          <rect x={v.x - 3} y={v.y} width="6" height={756 - v.y} fill="#0a80f8" />
        {/each}
        <text class="legend" x="891" y="752" fill="#1a80ff">GER30 - Volume du tick: 10 482</text>
        <line x1="883" x2="1826" y1="757.5" y2="757.5" stroke="#bccbdc" />
        <rect x="883" y="760" width="943" height="3" fill="#c2cfdd" />
        <line x1="883" x2="1826" y1="766.5" y2="766.5" stroke="#bccbdc" />

        <!-- stochastic -->
        <line x1="883" x2="1826" y1="777.5" y2="777.5" stroke="#000" stroke-width="1.4" />
        <line x1="883" x2="1826" y1="816.5" y2="816.5" stroke="#ff5050" />
        <line x1="883" x2="1826" y1="933.5" y2="933.5" stroke="#ff5050" />
        {@render series(rightK, '#22ee22', 1)}
        {@render series(rightD, '#ee1111', 1)}
        <text class="legend" x="891" y="779">
          <tspan fill="#22ee22">STOCHASTIC(GER30, 5, 3, 3, MVA, MVA) -</tspan>
          <tspan x="1155" fill="#22ee22">K: 20,33</tspan>
          <tspan x="1216" fill="#ff2222">D: 25,01</tspan>
        </text>
      </svg>
    </section>
  </div>
</div>

<style>
  :global(body) {
    margin: 0;
    background: #fff;
  }

  .screen {
    width: 1826px;
    height: 972px;
    display: flex;
    flex-direction: column;
    overflow: hidden;
    font-family: "DejaVu Sans", sans-serif;
    background: #f0f0f6;
  }

  .strip {
    height: 9px;
    flex: none;
    background: linear-gradient(#f1f1f7 0 6px, #dfdfea 6px 7px, #f6f6fb 7px);
    border-bottom: 1px solid #c4c4d8;
    box-sizing: border-box;
  }

  .workspace {
    display: flex;
    flex: 1;
    min-height: 0;
  }

  .pane {
    display: flex;
    flex-direction: column;
    min-width: 0;
    background: #fff;
  }

  .pane.left { width: 865px; }
  .pane.right { width: 944px; }

  .splitter {
    width: 17px;
    flex: none;
    box-sizing: border-box;
    background: #e2e2ee;
    border-left: 1px solid #f4f4fa;
    border-right: 1px solid #a8a8c4;
    background-image: linear-gradient(#b4b4cc, #b4b4cc);
    background-size: 1px 100%;
    background-position: 10px 0;
    background-repeat: no-repeat;
  }

  .tabbar {
    height: 35px;
    flex: none;
    display: flex;
    align-items: flex-end;
    gap: 4px;
    padding-bottom: 3px;
    box-sizing: border-box;
    background: linear-gradient(#f1f1f8, #e6e6f1);
    border-bottom: 1px solid #c6c6da;
    overflow: hidden;
  }

  .tab {
    height: 25px;
    flex: none;
    display: flex;
    align-items: center;
    justify-content: space-between;
    padding: 0 5px 0 8px;
    box-sizing: border-box;
    border: 1px solid #c6c6da;
    border-bottom: 0;
    border-radius: 6px 6px 0 0;
    background: linear-gradient(#f4f4f9, #dcdce8);
    font-size: 10.7px;
    color: #222244;
    white-space: nowrap;
  }

  .tab.first { padding-left: 6px; border-left: 0; border-radius: 0 6px 0 0; background: #f2f2f8; }
  .tab.first-cut { padding-left: 2px; border-left: 0; }
  .tab.current { background: linear-gradient(#fff6cf, #ffdf90); border-color: #e0d8b0; }
  .tab.plus {
    width: 26px;
    justify-content: center;
    padding: 0;
    font-size: 18px;
    color: #8a8a9a;
    background: linear-gradient(#f0f0f6, #d4d4e0);
  }

  .close {
    font-size: 15px;
    line-height: 1;
    font-weight: bold;
    color: #7c7c92;
  }

  .winbtns {
    margin-left: auto;
    margin-right: -5px;
    margin-bottom: 7px;
    display: flex;
    gap: 1px;
  }

  .winbtn {
    width: 18px;
    height: 18px;
    box-sizing: border-box;
    display: flex;
    align-items: center;
    justify-content: center;
    border: 1px solid #c0c0d4;
    background: #dcdce8;
    color: #a0a0b4;
    font-size: 13px;
    font-weight: bold;
  }

  .restore {
    width: 9px;
    height: 7px;
    border: 1px solid #a0a0b4;
    border-top-width: 2px;
  }

  .toolbar {
    height: 36px;
    flex: none;
    display: flex;
    align-items: center;
    overflow: hidden;
    box-sizing: border-box;
    background: linear-gradient(#fff 0 25%, #f1f1f6 50%, #c0c0d0 97%, #9090a8);
    box-shadow: 0 2px 3px #c8c8d4;
  }

  .pane.right .toolbar {
    margin-left: 3px;
  }

  .tool {
    height: 100%;
    flex: none;
    display: flex;
    align-items: center;
    justify-content: center;
  }

  .ico {
    flex: none;
    display: block;
  }

  .grip {
    width: 100%;
    height: 18px;
    background: repeating-linear-gradient(90deg, #b0b0c0 0 1px, #f0f0f4 1px 3px);
  }

  .sep {
    width: 1px;
    height: 100%;
    background: #d0d0dc;
    box-shadow: 1px 0 0 #fff;
  }

  .select {
    width: 100%;
    height: 23px;
    display: flex;
    align-items: center;
    justify-content: space-between;
    padding-left: 3px;
    box-sizing: border-box;
    background: #fff;
    font-size: 11px;
    color: #222;
  }

  .drop {
    width: 14px;
    height: 100%;
    flex: none;
    background: linear-gradient(#f0f0f4, #c4c4d0);
    position: relative;
  }

  .drop::after {
    content: "";
    position: absolute;
    left: 2px;
    top: 9px;
    border: 5px solid transparent;
    border-top: 5px solid #111;
    border-bottom: 0;
  }

  .caret {
    border: 3.5px solid transparent;
    border-top: 4px solid #8c8c9c;
    border-bottom: 0;
  }

  .price-btn {
    width: 100%;
    height: 31px;
    display: flex;
    flex-direction: column;
    align-items: center;
    justify-content: center;
    gap: 2px;
    box-sizing: border-box;
    font-size: 10px;
    color: #111;
    letter-spacing: 0.3px;
  }

  .price-btn.on {
    background: linear-gradient(#ffb060, #ff9a36);
    border: 1px solid #a0804a;
  }

  .price-btn b {
    width: 16px;
    height: 2px;
    display: block;
  }

  .price-btn .blue { background: #0070e0; }
  .price-btn .coral { background: #f06040; }

  .chart {
    flex: none;
    display: block;
  }

  .axis {
    font-size: 12px;
    fill: #3c3c80;
  }

  .axis.stamp {
    fill: #111;
    font-size: 12.8px;
  }

  .axis.green { fill: #22ff22; }
  .axis.dark { fill: #111; }

  .legend {
    font-size: 11.4px;
    letter-spacing: 0.55px;
  }

  .cloud {
    fill: #f3fbff;
    mix-blend-mode: multiply;
  }

  .faded {
    opacity: 0.55;
  }
</style>
